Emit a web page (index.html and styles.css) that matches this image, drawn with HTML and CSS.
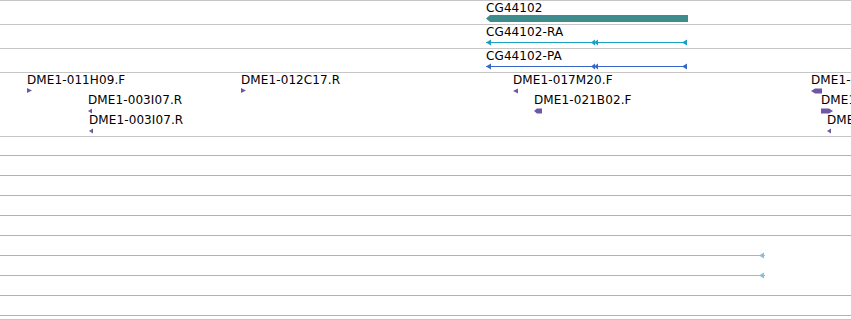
FILE: index.html
```html
<!DOCTYPE html>
<html lang="en">
<head>
  <meta charset="UTF-8" />
  <title>Track view</title>
  <link rel="stylesheet" href="styles.css">
</head>
<body>
  <div class="track">
    <div class="row row-gene">
      <div class="feat" style="left:486px; top:1px">
        <span class="label">CG44102</span>
        <svg class="glyph" width="202" height="7"><polygon class="gene" points="0,3.5 4,0 202,0 202,7 4,7"/></svg>
      </div>
    </div>

    <div class="row row-gene">
      <div class="feat" style="left:486px; top:1px">
        <span class="label">CG44102-RA</span>
        <svg class="glyph" width="202" height="7">
          <g class="rna">
            <line x1="0" y1="3.5" x2="201" y2="3.5"/>
            <polygon points="0,3.5 5,0.5 5,6.5"/>
            <polygon points="105,3.5 109,0.5 109,6.5"/>
            <polygon points="108,3.5 112,0.5 112,6.5"/>
            <polygon points="196,3.5 201,0.5 201,6.5"/>
          </g>
        </svg>
      </div>
    </div>

    <div class="row row-gene">
      <div class="feat" style="left:486px; top:1px">
        <span class="label">CG44102-PA</span>
        <svg class="glyph" width="202" height="7">
          <g class="cds">
            <line x1="0" y1="3.5" x2="201" y2="3.5"/>
            <polygon points="0,3.5 5,0.5 5,6.5"/>
            <polygon points="105,3.5 109,0.5 109,6.5"/>
            <polygon points="108,3.5 112,0.5 112,6.5"/>
            <polygon points="196,3.5 201,0.5 201,6.5"/>
          </g>
        </svg>
      </div>
    </div>

    <div class="row row-clones">
      <div class="feat" style="left:27px; top:0px">
        <span class="label">DME1-011H09.F</span>
        <svg class="glyph clone" width="6" height="6"><polygon points="0,0 5,2.5 0,5"/></svg>
      </div>
      <div class="feat" style="left:88px; top:20px">
        <span class="label">DME1-003I07.R</span>
        <svg class="glyph clone" width="6" height="6"><polygon points="0,3 4,0.5 4,5.5"/></svg>
      </div>
      <div class="feat" style="left:89px; top:40px">
        <span class="label">DME1-003I07.R</span>
        <svg class="glyph clone" width="6" height="6"><polygon points="0,3 4,0.5 4,5.5"/></svg>
      </div>
      <div class="feat" style="left:241px; top:0px">
        <span class="label">DME1-012C17.R</span>
        <svg class="glyph clone" width="6" height="6"><polygon points="0,0 5,2.5 0,5"/></svg>
      </div>
      <div class="feat" style="left:513px; top:0px">
        <span class="label">DME1-017M20.F</span>
        <svg class="glyph clone" width="6" height="6"><polygon points="0,3 5,0.5 5,5.5"/></svg>
      </div>
      <div class="feat" style="left:534px; top:20px">
        <span class="label">DME1-021B02.F</span>
        <svg class="glyph clone" width="9" height="6"><polygon points="0,3 3,0.5 8,0.5 8,5.5 3,5.5"/></svg>
      </div>
      <div class="feat" style="left:811px; top:0px">
        <span class="label">DME1-027K13.F</span>
        <svg class="glyph clone" width="12" height="6"><polygon points="0,3 4,0.5 11,0.5 11,5.5 4,5.5"/></svg>
      </div>
      <div class="feat" style="left:821px; top:20px">
        <span class="label">DME1-027K13.R</span>
        <svg class="glyph clone" width="12" height="6"><polygon points="0,0.5 8,0.5 12,3 8,5.5 0,5.5"/></svg>
      </div>
      <div class="feat" style="left:827px; top:40px">
        <span class="label">DME1-019E05.R</span>
        <svg class="glyph clone" width="6" height="6"><polygon points="0,3 4,0.5 4,5.5"/></svg>
      </div>
    </div>

    <div class="reads">
      <div class="wire lead"></div>
      <div class="wire"></div>
      <div class="wire"></div>
      <div class="wire"></div>
      <div class="wire"></div>
      <div class="wire part"><svg class="tip" width="6" height="7"><polygon points="0,3.5 5,0.5 5,6.5"/></svg></div>
      <div class="wire part"><svg class="tip" width="6" height="7"><polygon points="0,3.5 5,0.5 5,6.5"/></svg></div>
      <div class="wire"></div>
      <div class="wire"></div>
      <div class="tail"></div>
    </div>
  </div>
</body>
</html>
```

FILE: styles.css
```css
html, body {
  margin: 0;
  padding: 0;
  background: #fff;
}

body {
  width: 851px;
  height: 320px;
  overflow: hidden;
  font-family: 'DejaVu Sans', sans-serif;
  font-size: 12px;
  color: #000;
}

.track {
  border-top: 1px solid #c6c6c6;
}

.row {
  position: relative;
  border-bottom: 1px solid #c6c6c6;
}

.row-gene {
  height: 23px;
}

.row-clones {
  height: 63px;
}

.feat {
  position: absolute;
  display: flex;
  flex-direction: column;
  align-items: flex-start;
  white-space: nowrap;
}

.label {
  display: block;
  line-height: 13px;
  letter-spacing: 0.1px;
}

.row-clones .label {
  line-height: 14px;
}

.glyph {
  display: block;
}

.clone {
  margin-top: 1px;
}

.clone polygon {
  fill: #6f56a6;
}

.gene {
  fill: #3e8c8c;
}

.rna line {
  stroke: #17a0c4;
  stroke-width: 1;
}

.rna polygon {
  fill: #17a0c4;
}

.cds line {
  stroke: #3767c8;
  stroke-width: 1;
}

.cds polygon {
  fill: #3767c8;
}

.wire {
  height: 19px;
  border-bottom: 1px solid #8dbcde;
}

.wire.lead {
  height: 18px;
}

.wire.part {
  display: flex;
  align-items: flex-end;
  border-bottom: none;
  height: 20px;
  width: 765px;
}

.wire.part::before {
  content: "";
  flex: 1;
  height: 1px;
  background: #8dbcde;
}

.tip {
  display: block;
  margin-bottom: -3px;
  margin-left: -6px;
  position: relative;
}

.tip polygon {
  fill: #8dbcde;
}

.tail {
  height: 3px;
  border-bottom: 1px solid #c6c6c6;
}
```
